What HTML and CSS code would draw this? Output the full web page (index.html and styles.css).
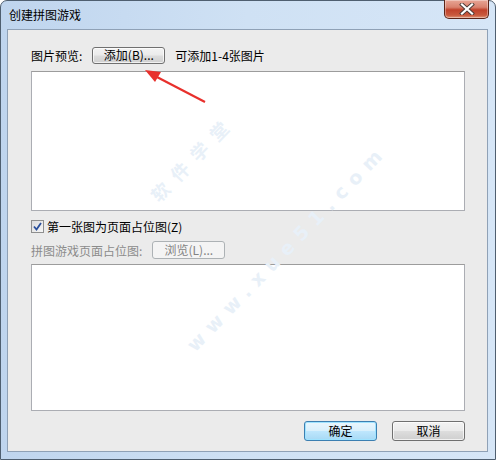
FILE: index.html
```html
<!DOCTYPE html>
<html lang="zh-CN">
<head>
<meta charset="utf-8">
<title>创建拼图游戏</title>
<link rel="stylesheet" href="styles.css">
</head>
<body>
<div class="window">
  <div class="titlebar">
    <span class="title">创建拼图游戏</span>
    <button class="close" aria-label="关闭">
      <svg width="16" height="12" viewBox="0 0 16 12">
        <path d="M3 1.5 L13 10.5 M13 1.5 L3 10.5" stroke="#4a3a36" stroke-width="4" stroke-linecap="square" fill="none"/>
        <path d="M3 1.5 L13 10.5 M13 1.5 L3 10.5" stroke="#ffffff" stroke-width="2.2" stroke-linecap="square" fill="none"/>
      </svg>
    </button>
  </div>
  <div class="client">
    <div class="row first-row">
      <span class="label">图片预览:</span>
      <button class="btn btn-add">添加(B)...</button>
      <span class="hint">可添加1-4张图片</span>
    </div>
    <div class="box preview"></div>
    <label class="row check-row">
      <span class="checkbox">
        <svg width="9" height="9" viewBox="0 0 9 9">
          <path d="M1 4.5 L3.5 7.5 L8 1" stroke="#2a4f9b" stroke-width="1.8" fill="none"/>
        </svg>
      </span>
      <span>第一张图为页面占位图(Z)</span>
    </label>
    <div class="row browse-row">
      <span class="label disabled">拼图游戏页面占位图:</span>
      <button class="btn btn-browse" disabled>浏览(L)...</button>
    </div>
    <div class="box placeholder"></div>
    <div class="footer">
      <button class="btn btn-ok">确定</button>
      <button class="btn btn-cancel">取消</button>
    </div>
    <div class="watermark wm1">软件学堂</div>
    <div class="watermark wm2">www.xue51.com</div>
    <svg class="arrow" width="80" height="40" viewBox="0 0 80 40">
      <path d="M62 38 L12 12" stroke="#e8302c" stroke-width="2.2" fill="none"/>
      <path d="M2 6 L18 8 L12 18 Z" fill="#e8302c"/>
    </svg>
  </div>
</div>
</body>
</html>
```
FILE: styles.css
```css
* { box-sizing: border-box; }
html, body { margin: 0; padding: 0; }
body {
  width: 496px;
  height: 460px;
  overflow: hidden;
  font-family: "Noto Sans CJK SC", "DejaVu Sans", sans-serif;
  font-size: 12px;
  color: #000;
}
.window {
  width: 496px;
  height: 460px;
  border: 1px solid #4f5f70;
  border-radius: 7px 7px 0 0;
  background: linear-gradient(90deg, #bfd5ee 0%, #cfe1f4 50%, #d6e6f7 100%);
  display: flex;
  flex-direction: column;
}
.titlebar {
  height: 28px;
  display: flex;
  align-items: flex-start;
  justify-content: space-between;
  padding-left: 8px;
}
.title {
  margin-top: 6px;
  line-height: 16px;
  color: #000;
}
.close {
  width: 45px;
  height: 19px;
  margin-top: -1px;
  margin-right: 6px;
  padding: 0;
  border: 1px solid #5b2418;
  border-top: none;
  border-radius: 0 0 5px 5px;
  background: linear-gradient(180deg, #e7a696 0%, #d9826f 40%, #c0422b 55%, #c95a3e 85%, #e09a7c 100%);
  display: flex;
  align-items: center;
  justify-content: center;
  box-shadow: inset 0 0 0 1px rgba(255,255,255,0.35);
}
.client {
  position: relative;
  overflow: hidden;
  margin: 0 7px 7px 6px;
  height: 423px;
  border: 1px solid #8fa1b6;
  background: #ebebeb;
  padding: 17px 22px 0 23px;
  display: flex;
  flex-direction: column;
}
.row {
  display: flex;
  align-items: center;
}
.first-row { height: 16px; }
.label { margin-right: 10px; }
.hint { margin-left: 10px; }
.disabled { color: #8b8b8b; }
.btn {
  font-family: "Noto Sans CJK SC", "DejaVu Sans", sans-serif;
  font-size: 12px;
  color: #000;
  padding: 0;
  border: 1px solid #707070;
  border-radius: 3px;
  background: linear-gradient(180deg, #f3f3f3 0%, #ebebeb 48%, #dddddd 52%, #cfcfcf 100%);
  box-shadow: inset 0 0 0 1px rgba(255,255,255,0.7);
  display: flex;
  align-items: center;
  justify-content: center;
  line-height: 14px;
}
.btn-add {
  width: 73px;
  height: 17px;
}
.box {
  background: #ffffff;
  border: 1px solid #abadb3;
  border-top-color: #9c9c9c;
}
.preview {
  margin-top: 8px;
  height: 140px;
}
.check-row {
  margin-top: 8px;
  height: 14px;
}
.checkbox {
  width: 13px;
  height: 13px;
  border: 1px solid #8e8f8f;
  background: linear-gradient(135deg, #dcdcdc 0%, #f6f6f6 100%);
  display: flex;
  align-items: center;
  justify-content: center;
  margin-right: 3px;
}
.browse-row {
  margin-top: 8px;
  height: 18px;
}
.btn-browse {
  width: 73px;
  height: 18px;
  color: #838383;
  border-color: #adb2b5;
  background: #f4f4f4;
  box-shadow: none;
}
.placeholder {
  margin-top: 5px;
  height: 147px;
}
.footer {
  margin-top: 10px;
  display: flex;
  justify-content: flex-end;
  gap: 15px;
}
.btn-ok, .btn-cancel {
  width: 73px;
  height: 20px;
}
.btn-ok {
  border-color: #3c7fb1;
  background: linear-gradient(180deg, #eaf6fd 0%, #d9f0fc 48%, #bee6fd 52%, #a7d9f5 100%);
  box-shadow: inset 0 0 0 1px #9fe3ff;
}
.watermark {
  position: absolute;
  color: #e8f0f8;
  font-family: "DejaVu Sans", "Noto Sans CJK SC", sans-serif;
  font-weight: bold;
  white-space: nowrap;
  line-height: 24px;
  transform: rotate(-46deg);
  transform-origin: left center;
  pointer-events: none;
}
.wm1 {
  left: 147px;
  top: 157px;
  font-size: 18px;
  letter-spacing: 10px;
}
.wm2 {
  left: 182px;
  top: 306px;
  font-size: 19px;
  letter-spacing: 8px;
}
.arrow {
  position: absolute;
  left: 135px;
  top: 34px;
}
```
